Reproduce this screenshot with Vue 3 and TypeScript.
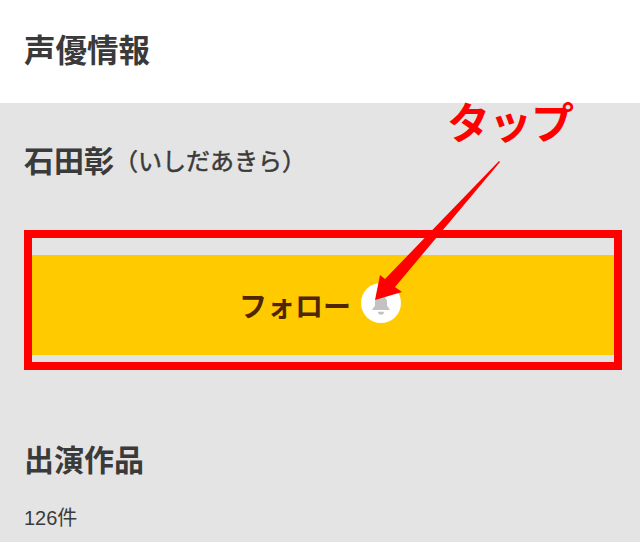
<script setup lang="ts">
const title: string = '声優情報'
</script>

<template>
  <div class="page">
    <header class="head">
      <h1 class="title">{{ title }}</h1>
    </header>
    <main class="body">
      <div class="name">
        <span class="name-main">石田彰</span><span class="name-kana">（いしだあきら）</span>
      </div>
      <div class="follow">
        <span class="follow-label">フォロー</span>
        <span class="bell-wrap">
          <svg class="bell" viewBox="0 0 24 24" width="24" height="24">
            <path d="M12 3a1.6 1.6 0 0 1 1.6 1.6v.6c3 .8 4.400 3.200 4.400 6.300v3.200l2.600 3.300v1H3.400v-1L6 14.700v-3.200c0-3.100 1.400-5.500 4.400-6.300v-.6A1.600 1.600 0 0 1 12 3z" fill="#c2c2c2" />
            <path d="M9 20.700h6a3 3 0 0 1-6 0z" fill="#c2c2c2" />
          </svg>
        </span>
      </div>
      <h2 class="works">出演作品</h2>
      <p class="count">126件</p>
    </main>

    <div class="frame"></div>
    <div class="tap">タップ</div>
    <svg class="arrow" viewBox="0 0 640 542" width="640" height="542">
      <polygon points="499,161 500,162 395,287 402,292 375,300 380,275 385,279" fill="#ff0000" />
    </svg>
  </div>
</template>

<style scoped>
.page {
  position: relative;
  width: 640px;
  height: 542px;
  overflow: hidden;
  background: #e4e4e4;
  font-family: "Liberation Sans", "Noto Sans CJK JP", sans-serif;
  color: #3a3a3a;
}
.head {
  height: 103px;
  background: #fff;
  display: flex;
  align-items: center;
  padding: 1px 0 0 24px;
  box-sizing: border-box;
}
.title {
  margin: 0;
  font-size: 31.5px;
  font-weight: 700;
  line-height: 1;
}
.body {
  display: flex;
  flex-direction: column;
}
.name {
  margin: 40px 0 0 24px;
  height: 32px;
  display: flex;
  align-items: center;
  font-weight: 700;
}
.name-main {
  font-size: 30px;
}
.name-kana {
  font-size: 24px;
  font-weight: 400;
  -webkit-text-stroke: 0.5px #3a3a3a;
}
.follow {
  margin: 80px 26px 0 32px;
  height: 100px;
  padding-right: 6px;
  box-sizing: border-box;
  background: #ffcb00;
  display: flex;
  align-items: center;
  justify-content: center;
  gap: 10px;
}
.follow-label {
  font-size: 28px;
  font-weight: 700;
  color: #4f2600;
}
.bell-wrap {
  width: 40px;
  height: 40px;
  margin: -4px 0 0 0;
  border-radius: 50%;
  background: #fff;
  display: flex;
  align-items: center;
  justify-content: center;
}
.works {
  margin: 88px 0 0 24px;
  font-size: 30px;
  font-weight: 700;
  line-height: 36px;
}
.count {
  margin: 27px 0 0 24px;
  font-size: 20px;
  line-height: 24px;
}
.frame {
  position: absolute;
  left: 24px;
  top: 230px;
  width: 598px;
  height: 140px;
  box-sizing: border-box;
  border: 8px solid #ff0000;
}
.tap {
  position: absolute;
  left: 447px;
  top: 96px;
  font-size: 43px;
  line-height: 56px;
  font-weight: 700;
  color: #ff0000;
  letter-spacing: -1px;
}
.arrow {
  position: absolute;
  left: 0;
  top: 0;
}
</style>
